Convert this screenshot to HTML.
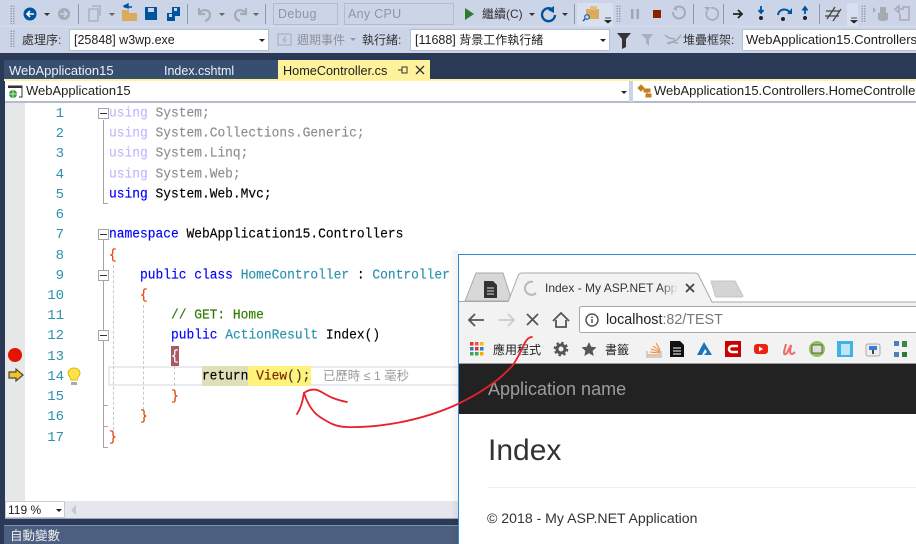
<!DOCTYPE html>
<html><head><meta charset="utf-8"><style>
html,body{margin:0;padding:0;background:#2a3a56}
#p{position:relative;width:916px;height:544px;overflow:hidden;background:#2a3a56;font-family:"Liberation Sans","Noto Sans CJK TC",sans-serif}
#p div,#p span.a{position:absolute}
.t{white-space:nowrap;font-size:12px;color:#1e1e1e;line-height:16px}
.box{background:#fff;border:1px solid #b5bfd3;box-sizing:border-box}
.dis{background:#ccd5e7;border:1px solid #b5bcc9;box-sizing:border-box}
.sep{width:1px;background:#8f99ab}
.grip{width:5px;background-image:radial-gradient(#8b93a5 0.6px,transparent 0.8px);background-size:2.5px 2.5px}
.c{font-family:"Liberation Mono","Noto Sans CJK TC",monospace;font-size:12.92px;line-height:20px;white-space:pre;color:#000;left:109px;transform:scaleY(1.1);-webkit-text-stroke:.15px currentColor}
.n{font-family:"Liberation Mono",monospace;font-size:14px;line-height:20px;color:#2b91af;width:64px;left:0;text-align:right;margin-top:1px}
.k2{color:#0000ff}
.dim{opacity:.45}
.ty{color:#2b91af}
.br{color:#e04000}
.fold{width:9px;height:9px;border:1px solid #a5a5a5;background:#fff;box-sizing:content-box}
.fold:after{content:"";position:absolute;left:1px;right:1px;top:4px;height:1px;background:#333}
</style></head><body><div id="p">

<!-- toolbars -->
<div style="left:0;top:0;width:916px;height:53px;background:#ccd5e7"></div>
<div style="left:0;top:26px;width:916px;height:1px;background:#d6ddeb"></div>
<div class="grip" style="left:10px;top:5px;height:19px"></div>
<div class="grip" style="left:10px;top:30px;height:18px"></div>
<svg style="position:absolute;left:0;top:0" width="916" height="53" viewBox="0 0 916 53">
<circle cx="30" cy="14" r="6.5" fill="#00539c"/><path d="M34 14h-7m3-3l-3 3 3 3" stroke="#fff" stroke-width="1.6" fill="none"/>
<path d="M44 13h6l-3 3z" fill="#333"/>
<circle cx="64" cy="14" r="6" fill="#a5aab3"/><path d="M60 14h7m-3-3l3 3-3 3" stroke="#ccd5e7" stroke-width="1.6" fill="none"/>
<path d="M89 9h9v12h-9z M92 6h8v10" fill="none" stroke="#a5acb9" stroke-width="1.3"/>
<path d="M109 13h6l-3 3z" fill="#666"/>
<path d="M122 13h15v8h-15z" fill="#dcaa5c"/><path d="M122 10h7v4h-7z" fill="#dcaa5c"/><path d="M124 6l4-2v4z M124 7h8" stroke="#00539c" stroke-width="1.4" fill="#00539c"/>
<path d="M145 7h12v13h-12z" fill="#00539c"/><path d="M148 8h6v4h-6z" fill="#ccd5e7"/>
<path d="M167 13h8v8h-8z M172 7h8v9h-8z" fill="#00539c"/><path d="M174 8h3v3h-3z M169 14h3v3h-3z" fill="#ccd5e7"/>
<path d="M199 8v6h6 M199 13c5-5 11-3 11 2 0 3-2 5-5 6" fill="none" stroke="#a5aab3" stroke-width="2.2"/>
<path d="M219 13h6l-3 3z" fill="#666"/>
<path d="M246 8v6h-6 M246 13c-5-5-11-3-11 2 0 3 2 5 5 6" fill="none" stroke="#a5aab3" stroke-width="2.2"/>
<path d="M253 13h6l-3 3z" fill="#666"/>
<path d="M328 13h6l-3 3z M444 13h6l-3 3z" fill="#8f97a5"/>
<path d="M465 8l9 6-9 6z" fill="#2b7b2b"/>
<path d="M529 13h6l-3 3z" fill="#333"/>
<path d="M553 10a6.5 6.5 0 1 0 2 5" fill="none" stroke="#00539c" stroke-width="2.4"/><path d="M548 10l6-4v7z" fill="#00539c"/>
<path d="M562 13h6l-3 3z" fill="#333"/>
<rect x="577" y="3" width="36" height="23" fill="#d8dfee"/>
<path d="M586 9h13v10h-13z" fill="#dcaa5c"/><path d="M590 6h7v4h-7z" fill="#e3bd7f"/><circle cx="587" cy="17" r="2.3" fill="#ccd5e7" stroke="#00539c"/><path d="M585 19l-2 2" stroke="#00539c" stroke-width="1.3"/>
<path d="M605 18h6M605 20.5h6l-3 2.500z" fill="#222" stroke="#222" stroke-width=".8"/>
<path d="M631 9h2.5v10H631zM636.5 9h2.500v10H636.500z" fill="#a0a7b4"/>
<rect x="653" y="10" width="8" height="8" fill="#8a2000"/>
<path d="M675 8a6 6 0 1 1-2 4" fill="none" stroke="#a5aab3" stroke-width="2"/><path d="M677 6l-4 3 4 2z" fill="#a5aab3"/>
<path d="M711 8a6 6 0 1 1-4 3" fill="none" stroke="#a5aab3" stroke-width="1.6"/><path d="M704 7l4 4 2-4z" fill="#a5aab3"/>
<path d="M733 14h9m-4-4l4 4-4 4" fill="none" stroke="#222" stroke-width="1.800"/>
<path d="M761 6v6m-2.500-2l2.500 3 2.500-3" stroke="#00539c" stroke-width="1.800" fill="none"/><circle cx="761" cy="18" r="2" fill="#222"/>
<path d="M778 15c1-7 10-7 12-2" stroke="#00539c" stroke-width="2" fill="none"/><path d="M792 8v6h-5z" fill="#00539c"/><circle cx="783" cy="19" r="2" fill="#222"/>
<path d="M805 14V8m-2.500 2.500L805 7l2.500 3.500" stroke="#00539c" stroke-width="1.800" fill="none"/><circle cx="805" cy="18" r="2" fill="#222"/>
<rect x="823" y="3" width="24" height="23" fill="#ccd5e7"/><rect x="847" y="3" width="11" height="23" fill="#d8dfee"/>
<path d="M827 19l8-12M833 21l8-12M826 11h14M825 16h14" stroke="#444" stroke-width="1.300" fill="none"/>
<path d="M851 18h6M851 20.500h6l-3 2.500z" fill="#222" stroke="#222" stroke-width=".8"/>
<path d="M873 7l3 3-3 3z M880 7h6v6h-6z M878 13h10v6a5 2 0 0 1-10 0z" fill="#a5aab3"/>
<path d="M895 9l4-3v7z M899 9h5M902 7h7v13h-9v-6" fill="none" stroke="#a5aab3" stroke-width="1.500"/>
<path d="M617 33h14l-5 6v8l-4 2v-10z" fill="#333"/>
<path d="M641 34h12l-4 5v7l-3-3v-4z" fill="#a9b0bd"/>
<path d="M661 35l4 3 6 1m6-4l-4 5-3 1-6 3M663 43l5-1 6 1" fill="none" stroke="#a5aab3" stroke-width="1.600" transform="translate(4 0)"/>
<rect x="278" y="34" width="13" height="11" fill="none" stroke="#a5aab3"/><path d="M286 36l-3 4h3l-2 3" stroke="#a5aab3" fill="none"/>
<path d="M350 38h6l-3 3z" fill="#8f97a5"/>
</svg>
<div class="sep" style="left:78px;top:4px;height:20px"></div>
<div class="sep" style="left:187px;top:4px;height:20px"></div>
<div class="sep" style="left:265px;top:4px;height:20px"></div>
<div class="sep" style="left:574px;top:4px;height:20px"></div>
<div class="sep" style="left:693px;top:4px;height:20px"></div>
<div class="sep" style="left:723px;top:4px;height:20px"></div>
<div class="sep" style="left:819px;top:4px;height:20px"></div>
<div class="grip" style="left:616px;top:5px;height:18px"></div>
<div class="grip" style="left:861px;top:5px;height:18px"></div>
<div class="dis" style="left:273px;top:3px;width:65px;height:22px"></div>
<div class="t" style="left:278px;top:6px;font-size:12.5px;color:#8f96a3;letter-spacing:.4px">Debug</div>
<div class="dis" style="left:344px;top:3px;width:110px;height:22px"></div>
<div class="t" style="left:348px;top:6px;font-size:12.5px;color:#8f96a3;letter-spacing:.3px">Any CPU</div>
<div class="t" style="left:482px;top:6px;color:#333">繼續(C)</div>

<div class="t" style="left:22px;top:32px;color:#333">處理序:</div>
<div class="box" style="left:69px;top:29px;width:200px;height:22px"></div>
<div class="t" style="left:74px;top:32px;font-size:12.5px">[25848] w3wp.exe</div>
<div style="left:259px;top:39px;width:0;height:0;border:3px solid transparent;border-top-color:#222;border-bottom:0"></div>
<div class="t" style="left:297px;top:32px;color:#8b8f98">週期事件</div>
<div class="t" style="left:362px;top:32px;color:#333">執行緒:</div>
<div class="box" style="left:410px;top:29px;width:200px;height:22px"></div>
<div class="t" style="left:415px;top:32px;font-size:12.5px">[11688] <span style="font-size:12px">背景工作執行緒</span></div>
<div style="left:600px;top:39px;width:0;height:0;border:3px solid transparent;border-top-color:#222;border-bottom:0"></div>
<div class="t" style="left:683px;top:32px;color:#333">堆疊框架:</div>
<div class="box" style="left:742px;top:29px;width:180px;height:22px"></div>
<div class="t" style="left:746px;top:32px;font-size:13px">WebApplication15.Controllers</div>

<!-- tabs -->
<div style="left:4px;top:60px;width:274px;height:19px;background:#364e6f"></div>
<div class="t" style="left:9px;top:63px;color:#eef1f6;font-size:13px">WebApplication15</div>
<div class="t" style="left:164px;top:63px;color:#eef1f6;font-size:12.5px">Index.cshtml</div>
<div style="left:278px;top:60px;width:152px;height:19px;background:#fff29d"></div>
<div class="t" style="left:283px;top:63px;font-size:12.7px">HomeController.cs</div>
<svg style="position:absolute;left:397px;top:64px" width="30" height="12"><path d="M1 6h4M5 3v6h5V3z" stroke="#333" fill="none"/><path d="M19 2l8 8m0-8l-8 8" stroke="#333" stroke-width="1.300"/></svg>
<div style="left:4px;top:79px;width:912px;height:2px;background:#fff29d"></div>

<!-- nav bar -->
<div style="left:5px;top:81px;width:911px;height:21px;background:#fff"></div>
<div style="left:5px;top:101px;width:911px;height:2px;background:#b4bccb"></div>
<div style="left:629px;top:81px;width:4px;height:21px;background:#ccd5e7"></div>
<svg style="position:absolute;left:8px;top:85px" width="16" height="14"><path d="M0 1h14v11h-3" fill="none" stroke="#333"/><path d="M0 1h14v2H0z" fill="#333"/><circle cx="5" cy="9" r="4" fill="#3a9a3a"/><path d="M1 9h8M5 5v8" stroke="#fff" stroke-width=".7"/></svg>
<div class="t" style="left:26px;top:83px;font-size:13px">WebApplication15</div>
<div style="left:621px;top:91px;width:0;height:0;border:3px solid transparent;border-top-color:#222;border-bottom:0"></div>
<svg style="position:absolute;left:637px;top:84px" width="16" height="15"><path d="M1 4l3-3 3 3-3 3z M7 5h6v3H7z M9 10h5v3H9z M10 8v3" fill="#c57d1d" stroke="#c57d1d"/></svg>
<div class="t" style="left:654px;top:83px;font-size:13px">WebApplication15.Controllers.HomeController</div>

<!-- editor -->
<div style="left:5px;top:103px;width:911px;height:398px;background:#fff"></div>
<div style="left:5px;top:103px;width:20px;height:398px;background:#e6e7e8"></div>

<div style="left:108px;top:366px;width:360px;height:20px;border:2px solid #eaeaf2;box-sizing:border-box"></div>
<div style="left:202px;top:366px;width:46px;height:20px;background:#e0e0b8"></div>
<div style="left:248px;top:366px;width:63px;height:20px;background:#fff27a"></div>
<div style="left:171px;top:346px;width:8px;height:20px;background:#a85a64"></div>

<!-- fold lines -->
<div style="left:103px;top:120px;width:1px;height:83px;background:#a5a5a5"></div>
<div style="left:103px;top:203px;width:5px;height:1px;background:#a5a5a5"></div>
<div style="left:103px;top:240px;width:1px;height:207px;background:#a5a5a5"></div>
<div style="left:103px;top:447px;width:5px;height:1px;background:#a5a5a5"></div>
<div style="left:103px;top:426px;width:5px;height:1px;background:#a5a5a5"></div>
<div style="left:103px;top:405px;width:5px;height:1px;background:#a5a5a5"></div>
<div style="left:113px;top:265px;width:0;height:165px;border-left:1px dashed #c8c8c8"></div>
<div style="left:143px;top:305px;width:0;height:105px;border-left:1px dashed #c8c8c8"></div>
<div style="left:174px;top:366px;width:0;height:20px;border-left:1px dashed #c8c8c8"></div>
<div class="fold" style="left:98px;top:108px"></div>
<div class="fold" style="left:98px;top:229px"></div>
<div class="fold" style="left:98px;top:270px"></div>
<div class="fold" style="left:98px;top:330px"></div>

<div class="n" style="top:103px">1</div><div class="n" style="top:123px">2</div><div class="n" style="top:143px">3</div><div class="n" style="top:164px">4</div><div class="n" style="top:184px">5</div><div class="n" style="top:204px">6</div><div class="n" style="top:224px">7</div><div class="n" style="top:245px">8</div><div class="n" style="top:265px">9</div><div class="n" style="top:285px">10</div><div class="n" style="top:305px">11</div><div class="n" style="top:325px">12</div><div class="n" style="top:346px">13</div><div class="n" style="top:366px">14</div><div class="n" style="top:386px">15</div><div class="n" style="top:406px">16</div><div class="n" style="top:427px">17</div>

<div class="c dim" style="top:103px"><span style="color:#8060ff">using</span> System;</div>
<div class="c dim" style="top:123px"><span style="color:#8060ff">using</span> System.Collections.Generic;</div>
<div class="c dim" style="top:143px"><span style="color:#8060ff">using</span> System.Linq;</div>
<div class="c dim" style="top:164px"><span style="color:#8060ff">using</span> System.Web;</div>
<div class="c" style="top:184px"><span class="k2">using</span> System.Web.Mvc;</div>
<div class="c" style="top:224px"><span class="k2">namespace</span> WebApplication15.Controllers</div>
<div class="c" style="top:245px"><span class="br">{</span></div>
<div class="c" style="top:265px">    <span class="k2">public class</span> <span class="ty">HomeController</span> : <span class="ty">Controller</span></div>
<div class="c" style="top:285px">    <span class="br">{</span></div>
<div class="c" style="top:305px;color:#2e7d00">        // GET: Home</div>
<div class="c" style="top:325px">        <span class="k2">public</span> <span class="ty">ActionResult</span> Index()</div>
<div class="c" style="top:346px;color:#fff">        {</div>
<div class="c" style="top:366px">            return <span style="color:#7a2a00">View</span><span style="color:#333">();</span></div>
<div class="c" style="top:386px">        <span class="br">}</span></div>
<div class="c" style="top:406px">    <span class="br">}</span></div>
<div class="c" style="top:427px"><span class="br">}</span></div>
<div class="t" style="left:323px;top:368px;color:#9a9a9a;font-size:12.4px">已歷時 ≤ 1 毫秒</div>

<svg style="position:absolute;left:0;top:340px" width="90" height="60">
<circle cx="15" cy="15" r="7" fill="#e51400"/>
<path d="M9 32h7v-3l7 6-7 6v-3H9z" fill="#f2c12e" stroke="#4a4a30" stroke-width="1.200"/>
<path d="M74 28c-4 0-6 3-6 5 0 3 3 4 3 7h6c0-3 3-4 3-7 0-2-2-5-6-5z" fill="#ffe24d" stroke="#d8b800"/><path d="M71 42h6v3h-6z" fill="#aaa"/>
</svg>

<!-- bottom -->
<div style="left:5px;top:501px;width:911px;height:17px;background:#e6e7ee"></div>
<div style="left:5px;top:518px;width:911px;height:1px;background:#9aa6bc"></div>
<div style="left:5px;top:501px;width:60px;height:17px;background:#fff;border:1px solid #c5cbd8;box-sizing:border-box"></div>
<div class="t" style="left:8px;top:502px;font-size:12px">119 %</div>
<div style="left:56px;top:509px;width:0;height:0;border:3px solid transparent;border-top-color:#222;border-bottom:0"></div>
<div style="left:71px;top:505px;width:0;height:0;border:5px solid transparent;border-right-color:#c5c8d0;border-left:0"></div>
<div style="left:4px;top:525px;width:912px;height:19px;background:#4d5f80;border-top:1px solid #8090ac;box-sizing:border-box"></div>
<div class="t" style="left:10px;top:528px;color:#f0f0f0;font-size:12.5px">自動變數</div>

<!-- browser -->
<div style="left:450px;top:250px;width:8px;height:294px;background:linear-gradient(to right,rgba(0,0,0,0),rgba(0,0,0,.06))"></div>
<div style="left:458px;top:254px;width:458px;height:290px;background:#fff"></div>
<div style="left:458px;top:254px;width:458px;height:1px;background:#2a8ddc"></div>
<div style="left:458px;top:254px;width:1px;height:290px;background:#2a8ddc"></div>
<div style="left:459px;top:302px;width:457px;height:61px;background:#f2f2f2"></div>
<svg style="position:absolute;left:459px;top:255px" width="457" height="110" viewBox="459 255 457 110">
<path d="M465 301l11-28h27l9 28z" fill="#d8d8d8" stroke="#a9a9a9"/>
<path d="M508 302l10-26q1-3 4-3h173q3 0 4 3l13 26h207V303H508z" fill="#f2f2f2"/>
<path d="M508 302l10-26q1-3 4-3h173q3 0 4 3l13 26h207" fill="none" stroke="#a9a9a9"/>
<path d="M459 301.500h49" stroke="#a9a9a9"/>
<path d="M484 281h9l4 4v13h-13z" fill="#333"/><path d="M487 288h7M487 291h7M487 294h7" stroke="#ddd"/>
<path d="M533 282a6.500 6.500 0 1 0 3 11" fill="none" stroke="#b8b8b8" stroke-width="2"/>
<path d="M686 284l8 8m0-8l-8 8" stroke="#444" stroke-width="1.800"/>
<path d="M711 281h24l8 15q0 1-2 1h-24q-2 0-2-2z" fill="#d4d4d4" stroke="#c4c4c4"/>
<path d="M484 320h-14m5-6l-6 6 6 6" fill="none" stroke="#555" stroke-width="1.800"/>
<path d="M499 320h14m-5-6l6 6-6 6" fill="none" stroke="#ccc" stroke-width="1.800"/>
<path d="M527 314l11 11m0-11l-11 11" stroke="#555" stroke-width="1.800"/>
<path d="M553 321l8-8 8 8M556 320v7h10v-7" fill="none" stroke="#555" stroke-width="1.800"/>
<rect x="579.500" y="306.500" width="360" height="26" rx="2" fill="#fff" stroke="#a9a9a9"/>
<circle cx="592" cy="320" r="6" fill="none" stroke="#555" stroke-width="1.500"/><path d="M592 319v4M592 316.500v1.500" stroke="#555" stroke-width="1.500"/>
<rect x="470" y="342" width="3.500" height="3.500" fill="#d33"/><rect x="475" y="342" width="3.500" height="3.500" fill="#e53"/><rect x="480" y="342" width="3.500" height="3.500" fill="#fb0"/>
<rect x="470" y="347" width="3.500" height="3.500" fill="#37c"/><rect x="475" y="347" width="3.500" height="3.500" fill="#d33"/><rect x="480" y="347" width="3.500" height="3.500" fill="#37c"/>
<rect x="470" y="352" width="3.500" height="3.500" fill="#3a5"/><rect x="475" y="352" width="3.500" height="3.500" fill="#3a5"/><rect x="480" y="352" width="3.500" height="3.500" fill="#fa0"/>
<circle cx="561" cy="349" r="4" fill="none" stroke="#555" stroke-width="3"/><circle cx="561" cy="349" r="6.300" fill="none" stroke="#555" stroke-width="2" stroke-dasharray="2.500 2.450"/>
<path d="M589 342l2.200 4.800 5.300.6-3.900 3.500 1.100 5.100-4.700-2.700-4.700 2.700 1.100-5.100-3.900-3.500 5.300-.6z" fill="#555"/>
<path d="M648 355h12M650 352l10 1M651 349l9 3M653 346l7 5M656 343l4 7" stroke="#e9893a" fill="none"/><path d="M647 351v6h14v-6" fill="none" stroke="#aaa"/>
<path d="M670 341h10l4 4v12h-14z" fill="#111"/><path d="M673 348h8M673 351h8M673 354h8" stroke="#fff"/>
<path d="M697 355l7-13 3 5 5 8h-8l3-3-2-3-3 6z" fill="#1b75bc"/>
<rect x="725" y="341" width="16" height="16" fill="#c00"/><path d="M738 346h-6a3 3 0 0 0 0 6h6" fill="none" stroke="#fff" stroke-width="2.600"/>
<rect x="754" y="344" width="14" height="10" rx="3" fill="#e21"/><path d="M759 346.500l4 2.500-4 2.500z" fill="#fff"/>
<path d="M786 344l-2 8q0 4 3 1l4-8-1 7q1 4 5 0" fill="none" stroke="#ef6a6a" stroke-width="2"/>
<circle cx="817" cy="349" r="8" fill="#8fc34f"/><rect x="812" y="345" width="10" height="8" fill="#ddd" stroke="#444" stroke-width=".8"/>
<rect x="837" y="341" width="16" height="16" fill="#3fb2e8"/><rect x="841" y="344" width="9" height="11" fill="#bfe6f7"/>
<rect x="866" y="344" width="14" height="12" rx="2" fill="#eee" stroke="#aaa"/><rect x="869" y="346" width="8" height="4" fill="#3a7bd5"/><path d="M873 350v4" stroke="#444" stroke-width="2"/>
<path d="M894 341h5v5h-5zM894 352h5v5h-5z" fill="#4a7ec0"/><path d="M902 341h5v6h-5z" fill="#3a8a3a"/><path d="M902 352h5v5h-5z" fill="#2a7a3a"/>
</svg>
<div class="t" style="left:545px;top:280px;font-size:12px;color:#333;width:132px;overflow:hidden">Index - My ASP.NET Application</div>
<div style="left:660px;top:278px;width:18px;height:18px;background:linear-gradient(to right,rgba(242,242,242,0),#f2f2f2)"></div>
<div class="t" style="left:606px;top:311px;font-size:14.3px;line-height:18px;color:#222">localhost<span style="color:#777">:82/TEST</span></div>
<div class="t" style="left:493px;top:342px;font-size:12px">應用程式</div>
<div class="t" style="left:605px;top:342px;font-size:12px">書籤</div>
<div style="left:459px;top:363px;width:457px;height:51px;background:#222;border-top:1px solid #9a9a9a;box-sizing:border-box"></div>
<div class="t" style="left:488px;top:379px;font-size:18px;line-height:20px;color:#9d9d9d">Application name</div>
<div class="t" style="left:488px;top:434px;font-size:30px;line-height:34px;color:#333">Index</div>
<div style="left:488px;top:487px;width:428px;height:1px;background:#eee"></div>
<div class="t" style="left:487px;top:510px;font-size:14.1px;line-height:17px;color:#333">© 2018 - My ASP.NET Application</div>

<!-- red annotation -->
<svg style="position:absolute;left:0;top:0" width="916" height="544" fill="none" stroke="#e8202c" stroke-linecap="round" stroke-width="1.800">
<path d="M297 414c2-3 5-8 7-21"/>
<path d="M304 393c3 9 8 19 16 24 8 5 15 10 27 10 28 1 73-5 113-24 20-10 40-23 53-38 7-10 10-20 13-24 2-3 4-4 6-4"/>
<path d="M304 393c4-3 9-4 13-3 6 2 10 6 16 8 5 2 9 3 14 4"/>
</svg>
</div></body></html>
